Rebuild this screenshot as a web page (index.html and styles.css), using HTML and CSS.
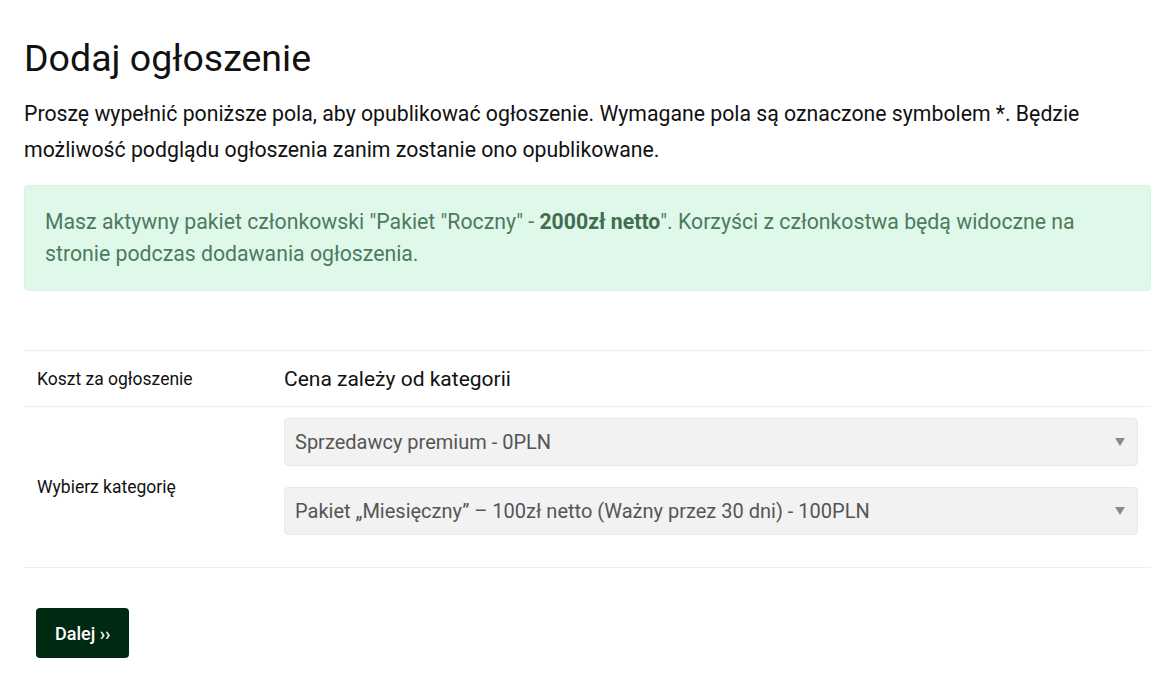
FILE: index.html
```html
<!DOCTYPE html>
<html lang="pl">
<head>
<meta charset="utf-8">
<title>Dodaj ogłoszenie</title>
<link rel="stylesheet" href="styles.css">
</head>
<body>
<main class="page">
  <h1 class="title">Dodaj ogłoszenie</h1>
  <p class="intro">Proszę wypełnić poniższe pola, aby opublikować ogłoszenie. Wymagane pola są oznaczone symbolem *. Będzie możliwość podglądu ogłoszenia zanim zostanie ono opublikowane.</p>
  <div class="alert">Masz aktywny pakiet członkowski "Pakiet "Roczny" - <strong>2000zł netto</strong>". Korzyści z członkostwa będą widoczne na stronie podczas dodawania ogłoszenia.</div>
  <div class="form-table">
    <div class="row row-cost">
      <div class="label">Koszt za ogłoszenie</div>
      <div class="value cost">Cena zależy od kategorii</div>
    </div>
    <div class="row row-cat">
      <div class="label">Wybierz kategorię</div>
      <div class="value selects">
        <div class="select"><span>Sprzedawcy premium - 0PLN</span><span class="arrow"></span></div>
        <div class="select"><span>Pakiet „Miesięczny” – 100zł netto (Ważny przez 30 dni) - 100PLN</span><span class="arrow"></span></div>
      </div>
    </div>
  </div>
  <div class="actions">
    <button class="btn" type="button">Dalej ››</button>
  </div>
</main>
</body>
</html>
```
FILE: styles.css
```css
* { box-sizing: border-box; }
html, body { margin: 0; padding: 0; background: #fff; }
body {
  font-family: Roboto, "Noto Sans", Arial, sans-serif;
  color: #111;
}
.page {
  padding: 0 23px 0 24px;
}
.title {
  margin: 0;
  padding-top: 35px;
  font-size: 37.5px;
  font-weight: 400;
  line-height: 46px;
  color: #111;
}
.intro {
  margin: 15px 0 17px;
  font-size: 21.25px;
  line-height: 36px;
  color: #111;
}
.alert {
  background: #e0f8e9;
  border: 1px solid #d8f4e3;
  border-radius: 4px;
  padding: 20px 20px;
  font-size: 21.25px;
  line-height: 32px;
  color: #4d7a5e;
}
.alert strong { font-weight: 700; color: #3f6e50; }
.form-table {
  margin-top: 59px;
  border-top: 1px solid #eeeeee;
}
.row {
  display: flex;
  align-items: center;
  border-bottom: 1px solid #eeeeee;
}
.row-cost { height: 56px; }
.label {
  width: 260px;
  flex: none;
  padding-left: 13px;
  font-size: 17.5px;
  color: #111;
}
.value { flex: 1; }
.cost { font-size: 21px; color: #111; }
.selects {
  padding: 11px 13px 12px 0;
  display: flex;
  flex-direction: column;
  gap: 21px;
}
.selects .select:last-child { margin-bottom: 20px; }
.select {
  height: 48px;
  display: flex;
  align-items: center;
  justify-content: space-between;
  background: #f2f2f2;
  border: 1px solid #e9e9e9;
  border-radius: 4px;
  padding: 0 12px 0 10px;
  font-size: 20px;
  color: #555;
}
.arrow {
  width: 0;
  height: 0;
  border-left: 5px solid transparent;
  border-right: 5px solid transparent;
  border-top: 8px solid #8a8a8a;
}
.actions { padding: 40px 0 0 12px; }
.btn {
  background: #002912;
  color: #fff;
  border: none;
  border-radius: 4px;
  height: 50px;
  padding: 0 18px 0 19px;
  font-family: Roboto, "Noto Sans", Arial, sans-serif;
  font-size: 18px;
  font-weight: 500;
  cursor: pointer;
}
```
